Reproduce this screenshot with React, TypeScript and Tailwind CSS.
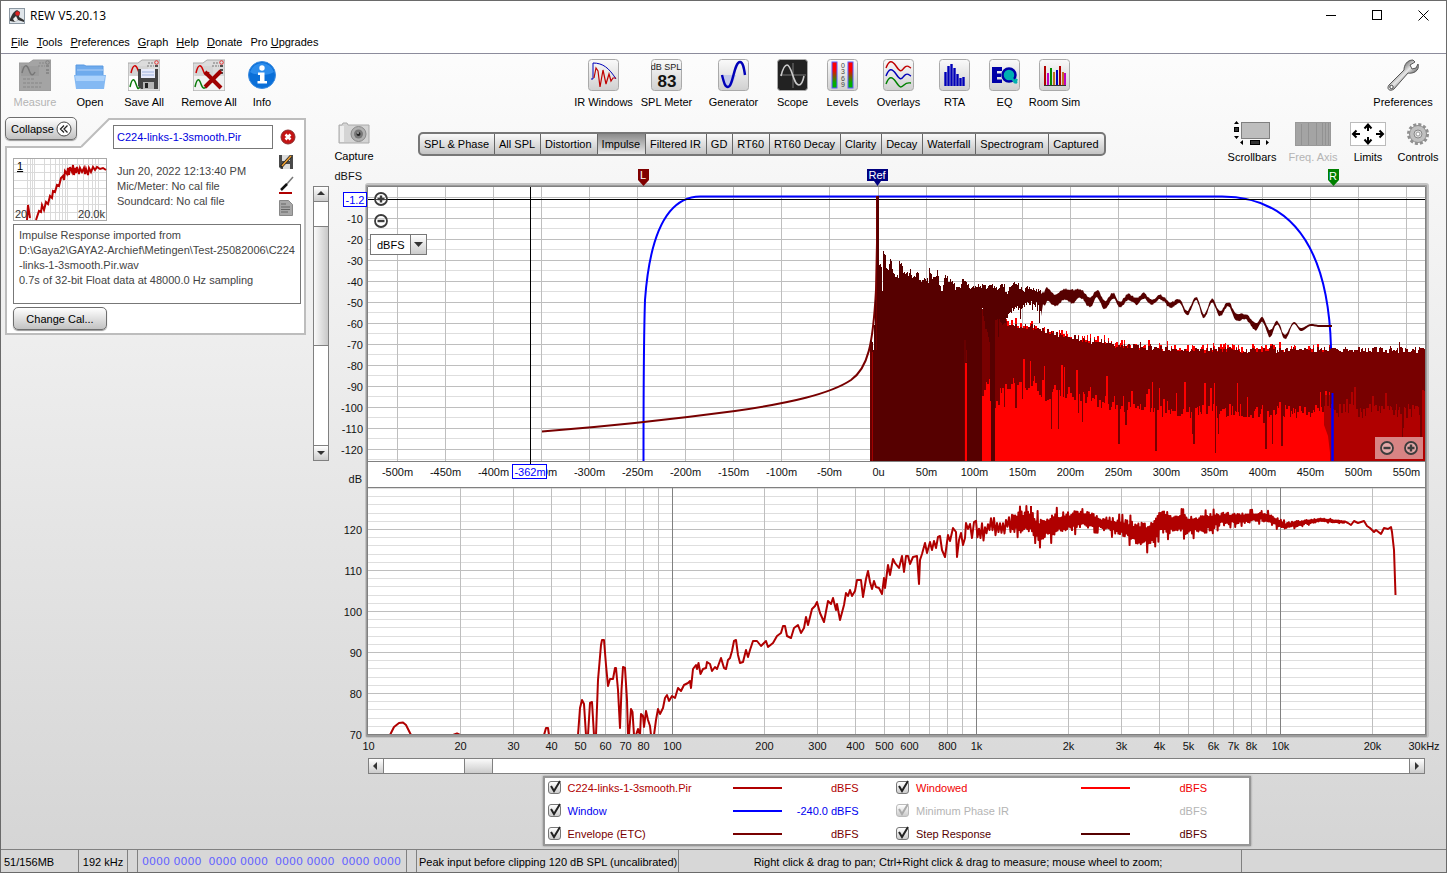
import type { ReactNode } from "react";

type Point = [number, number];
type Band = [number, number, number];

// Small seeded generator so that the traces are the same on every render
const makeRandom = (seed: number) => () => {
  seed = (seed * 16807) % 2147483647;
  return seed / 2147483647;
};

const lerp = (list: number[][], x: number, col: number, smooth = false) => {
  if (x <= list[0][0]) return list[0][col];
  for (let i = 1; i < list.length; i++) {
    if (x <= list[i][0]) {
      const a = list[i - 1];
      const b = list[i];
      const t = (x - a[0]) / (b[0] - a[0]);
      return a[col] + (b[col] - a[col]) * (smooth ? (1 - Math.cos(Math.PI * t)) / 2 : t);
    }
  }
  return list[list.length - 1][col];
};

const timeX = (i: number) => Math.round(397 + 48.05 * i) + 0.5;
const freqX = (f: number) => Math.round(368 + 304 * Math.log10(f / 10)) + 0.5;

const timeLabels = Array.from({ length: 22 }, (_, i) => {
  const t = -500 + i * 50;
  return t === 0 ? "0u" : `${t}m`;
});

const freqLines = [20, 30, 40, 50, 60, 70, 80, 90].flatMap((f) => [f, f * 10, f * 100]);

const freqLabels: [number, string][] = [
  [10, "10"], [20, "20"], [30, "30"], [40, "40"], [50, "50"], [60, "60"], [70, "70"], [80, "80"],
  [100, "100"], [200, "200"], [300, "300"], [400, "400"], [500, "500"], [600, "600"], [800, "800"],
  [1000, "1k"], [2000, "2k"], [3000, "3k"], [4000, "4k"], [5000, "5k"], [6000, "6k"], [7000, "7k"],
  [8000, "8k"], [10000, "10k"], [20000, "20k"],
];

// The step response is solid down to the axis before 981
const stepTop: Point[] = [
  [870, 340], [872, 342], [873, 350], [875, 300], [876, 196], [878, 196], [879, 265], [881, 267], [882, 290], [883, 251], [885, 255],
  [886, 268], [888, 272], [890, 258], [892, 268], [894, 275], [898, 276], [899, 261], [901, 263], [903, 274], [908, 274],
  [910, 269], [912, 278], [915, 275], [917, 272], [920, 282], [924, 278], [928, 281], [929, 270], [931, 276], [935, 279],
  [937, 272], [939, 284], [942, 291], [944, 278], [946, 276], [948, 281], [953, 282], [955, 289], [959, 289], [962, 280],
  [966, 283], [970, 287], [978, 286], [987, 287], [995, 286], [998, 289], [1001, 283], [1004, 286], [1006, 294], [1010, 286],
  [1013, 283], [1017, 284], [1022, 291], [1030, 287], [1040, 292], [1048, 289], [1055, 294], [1065, 289], [1073, 290], [1080, 289],
  [1090, 298], [1097, 290], [1105, 301], [1113, 293], [1120, 302], [1128, 294], [1137, 298], [1143, 293], [1152, 300], [1160, 295],
  [1171, 302], [1179, 299], [1187, 311], [1196, 297], [1204, 314], [1212, 299], [1220, 311], [1228, 302], [1237, 314], [1245, 314],
  [1256, 323], [1262, 317], [1270, 330], [1277, 321], [1285, 335], [1294, 322], [1301, 328], [1311, 324], [1320, 325], [1333, 325],
];

const stepBottom: Point[] = [
  [981, 461], [982, 309], [984, 322], [986, 330], [989, 340], [991, 461], [994, 461], [995, 318], [1000, 320], [1003, 325], [1008, 315],
  [1013, 308], [1020, 306], [1030, 302], [1038, 303], [1041, 316], [1043, 303], [1048, 301], [1055, 306], [1065, 299], [1073, 303],
  [1080, 297], [1090, 307], [1097, 297], [1105, 309], [1113, 298], [1120, 307], [1128, 300], [1137, 304], [1143, 298], [1152, 304],
  [1160, 299], [1171, 307], [1179, 303], [1187, 315], [1196, 300], [1204, 318], [1212, 302], [1220, 316], [1228, 306], [1237, 321],
  [1245, 319], [1256, 330], [1262, 321], [1270, 337], [1277, 324], [1285, 339], [1294, 324], [1301, 331], [1311, 326], [1320, 327],
  [1333, 327],
];

const envelope: Band[] = [
  [982, 311, 384], [990, 324, 372], [995, 318, 400], [1003, 324, 380], [1015, 326, 374], [1030, 328, 378], [1045, 331, 388],
  [1060, 336, 386], [1080, 340, 388], [1100, 343, 394], [1120, 347, 400], [1145, 349, 404], [1200, 351, 404], [1425, 351, 404],
];

const columns = (() => {
  const rand = makeRandom(4711);
  let windowed = "M982 461";
  let top = "M982 461";
  let bottom = "";
  let x = 982;
  while (x < 1425) {
    const next = Math.min(1425, x + (rand() < 0.45 ? 2 : 1));
    const ragged = rand() < 0.06 ? rand() * 5 : 0;
    const t = lerp(envelope, x, 1) + 2 - rand() * 6 - ragged;
    const r = rand();
    const spike = r < 0.09 ? 18 + rand() * 32 : r < 0.2 ? -rand() * 22 : rand() * 14;
    const b = lerp(envelope, x, 2) + (x < 1040 && spike > 18 ? spike - 14 : spike);
    const red = t - (rand() < 0.45 ? 1 + rand() * 5 : 0);
    if (x < 1330) windowed += `V${red.toFixed(0)}H${next}`;
    top += `V${t.toFixed(0)}H${next}`;
    bottom = `V${b.toFixed(0)}H${x}` + bottom;
    x = next;
  }
  return { windowed: `${windowed}V461Z`, envelope: `${top}${bottom}Z` };
})();

const stepPath = (() => {
  const rand = makeRandom(99);
  let top = "";
  let bottom = "";
  for (let x = 870; x < 1333; x += 1) {
    const wave = x > 1040;
    const noise = x < 880 ? 0 : x < 1048 ? 5 : x < 1180 ? 2 : x < 1290 ? 1.5 : 0;
    const t = lerp(stepTop, x, 1, wave) - noise * (rand() - 0.5);
    const drop = x > 996 && x < 1050 && rand() < 0.14 ? rand() * 16 : 0;
    const b = x < 982 ? 461 : lerp(stepBottom, x, 1, wave) + noise * (rand() - 0.3) + drop;
    if (wave) {
      top += `L${x} ${t.toFixed(1)}`;
      bottom = `L${x} ${Math.max(t + 2, b).toFixed(1)}` + bottom;
    } else {
      top += `L${x} ${t.toFixed(0)}H${x + 1}`;
      bottom = `L${x + 1} ${Math.min(461, b).toFixed(0)}H${x}` + bottom;
    }
  }
  return `M870 461${top}${bottom}Z`;
})();

const smoothSpl =
  "M390 735L394 727L399 723L403 722.5L406 725L411 735M453 735L457 733.5L460 735M544 735L546 728H548L549 735M578 735L580 708L582 700L584 704L586 735M588 735L590 703L592 702L594 735" +
  "M596 735L598 680L601 645L602 640H604L606 665L608 686L610 679H613L615 668H616L618 690L620 728L621.5 690L623 667L625 668L627 700L628 735M629 735L631 709L632.5 712L634 735M636 735L638 729L640 735L641 714L643 716L644 727L646 711L648 720L650 726L651 735" +
  "M654 735L656 720L658 709L660 714L663 708L665 698L667 695L669 701L672 696L675 698L678 688L681 691L684 685L688 683L690 681L691 688L693 669L696 665L697 669L698.5 663L700.5 674L703 669L706 668L707 662L710 664L712 671L715 667L717 669L721 658L724 668L726 669L728 660L730 658L732 651L734 641L736 640L738 655L740 663L743 662L746 650L748 657L750 650L753 641L757 641L761 646L766 641L768 647L773 643L777 636L781 633L783 626H785L787 636L791 638L794 628L798 625L801 633L804 628L806 617L808 625L812 609L815 606L817 602L820 613L824 622L828 601L831 604L833 598L836 610L837 604L840 620L844 605L846 593L848 596L850 590L852 596L855 591L857 580L861 580L863 597L866 579L868 571L870 582L872 589L874 581L876 587L879 588L882 594L884 578L885 588L888 565L890 575L893 559L895 563L899 568L902 556L904 572L906 556H908L910 564L913 557L917 556L919 584L920 560L922 554L925 543L927 553L930 542L932 550L934 541L936 548L938 537L940 536L942 550L945 557L948 535L950 541L953 528L956 532L957 557L959 540L961 533L963 545L965 538L966 523L968 529L970 524L972 538L974 522";

const splBand: Band[] = [
  [976, 532, 9], [983, 535, 9], [987, 527, 6], [993, 525, 6], [1000, 530, 8], [1008, 521, 6], [1014, 522, 12], [1030, 522, 13],
  [1040, 530, 14], [1050, 526, 14], [1065, 522, 12], [1085, 518, 11], [1100, 523, 8], [1120, 527, 10], [1135, 532, 13],
  [1147, 535, 14], [1154, 532, 13], [1160, 522, 14], [1180, 524, 12], [1205, 524, 11], [1220, 519, 8], [1245, 518, 6],
  [1262, 516, 6], [1275, 521, 6], [1285, 526, 4], [1300, 523, 3], [1320, 520, 2], [1345, 522, 1],
];

const splPath = (() => {
  const rand = makeRandom(2024);
  let d = smoothSpl;
  let sign = 1;
  for (let x = 976; x < 1345; x += x < 1012 ? 1.5 : 0.8) {
    sign = -sign;
    const amp = lerp(splBand, x, 2) * (rand() < 0.09 ? 1.25 : 0.35 + rand() * 0.5);
    d += `L${x.toFixed(1)} ${(lerp(splBand, x, 1) + sign * amp).toFixed(1)}`;
  }
  return `${d}L1348 523L1351 525L1354 521L1358 523L1364 521L1367 526L1370 528L1374 532L1376 530L1381 534L1384 528L1388 529L1391 527L1392 532L1394 550L1395.5 595M1031 525V506`;
})();

const Charts = () => (
  <svg viewBox="330 164 1116 592" className="block w-full h-auto font-['Liberation_Sans',Arial,sans-serif] text-[11px]" role="img" aria-label="Impulse and SPL graphs">
    <defs>
      <clipPath id="plotTop"><rect x="368" y="187" width="1057" height="274" /></clipPath>
      <clipPath id="plotBottom"><rect x="368" y="487" width="1057" height="248" /></clipPath>
    </defs>
    <rect x="365" y="183" width="1064" height="555" rx="3" fill="#c4c4c4" />
    <rect x="366" y="185" width="1061" height="552" rx="1" fill="#9c9c9c" />
    <rect x="368" y="187" width="1057" height="548" fill="#fff" />

    {/* impulse plot */}
    <g clipPath="url(#plotTop)" shapeRendering="crispEdges" strokeWidth="1">
      {Array.from({ length: 13 }, (_, i) => (
        <path key={i} d={`M368 ${207.5 + i * 21}H1425`} stroke="#dedede" />
      ))}
      {Array.from({ length: 13 }, (_, i) => (
        <path key={i} d={`M368 ${197.5 + i * 21}H1425`} stroke="#bebebe" />
      ))}
      {timeLabels.map((label, i) => (
        <path key={label} d={`M${timeX(i)} 187V461`} stroke="#bebebe" />
      ))}
    </g>
    <path d="M368 186.5H1425M367.5 187V735M1425.5 187V735M368 461.5H1425" stroke="#808080" fill="none" shapeRendering="crispEdges" />
    <g clipPath="url(#plotTop)">
      <rect x="1325" y="356" width="100" height="105" fill="#b00000" />
      <path d={columns.windowed} fill="#f00" shapeRendering="crispEdges" />
      <path d="M1324 395H1425V461H1331L1328 436L1324 425Z" fill="#b00000" />
      <path d="M643.5 461C643.5 400 644 330 645 300C649 245 663 197 700 196.5H1222C1290 197 1328 245 1331 347V356M1332.5 390V461" fill="none" stroke="#00f" strokeWidth="2" />
      <path d={columns.envelope} fill="#780000" shapeRendering="crispEdges" />
      <path d="M1332.5 393V461" stroke="#00f" strokeWidth="2" />
      <path d="M542 431.5C600 427 660 421 735 411C790 403 830 394 851 380C868 368 873 345 876 290L878 196" fill="none" stroke="#780000" strokeWidth="2" />
      <path d="M367 199.5H1425" stroke="#000" shapeRendering="crispEdges" />
      <path d={stepPath} fill="#560000" />
      <path d="M871 342V461M876.5 196V350" stroke="#780000" fill="none" />
      <path d="M872.5 352V461" stroke="#a00000" />
      <path d="M965 340V461M966.5 350V362" stroke="#780000" />
      <path d="M966 363V461" stroke="#f00" strokeWidth="2" />
    </g>
    <path d="M530.5 187V464" stroke="#000" shapeRendering="crispEdges" />

    <path d="M638 169H649V180L643.5 186L638 180Z" fill="#800000" />
    <path d="M867 169H888V181H881L877.5 186L874 181H867Z" fill="#000080" />
    <path d="M1328 169H1339V180L1333.5 186L1328 180Z" fill="#008000" />
    <g fill="#fff" textAnchor="middle">
      <text x="643" y="179">L</text>
      <text x="877" y="179">Ref</text>
      <text x="1333" y="180">R</text>
    </g>

    <g textAnchor="end" fill="#111">
      <text x="362" y="180">dBFS</text>
      {Array.from({ length: 12 }, (_, i) => (
        <text key={i} x="363" y={223 + i * 21}>{-10 - i * 10}</text>
      ))}
      <text x="362" y="483">dB</text>
      {[120, 110, 100, 90, 80, 70].map((v, i) => (
        <text key={v} x="362" y={534 + i * 41}>{v}</text>
      ))}
    </g>
    <g textAnchor="middle" fill="#111">
      {timeLabels.map((label, i) => (
        <text key={label} x={timeX(i)} y="476">{label}</text>
      ))}
      {freqLabels.map(([f, label]) => (
        <text key={f} x={freqX(f)} y="750">{label}</text>
      ))}
      <text x="1424" y="750">30kHz</text>
    </g>
    <g fill="#fff" stroke="#00f" shapeRendering="crispEdges">
      <rect x="343.5" y="192.5" width="23" height="14" />
      <rect x="512.5" y="464.5" width="34" height="14" />
    </g>
    <g fill="#00f" textAnchor="middle">
      <text x="355" y="204">-1.2</text>
      <text x="530" y="476">-362m</text>
    </g>

    {/* frequency response plot */}
    <g clipPath="url(#plotBottom)" shapeRendering="crispEdges" strokeWidth="1">
      {Array.from({ length: 30 }, (_, i) => (
        <path key={i} d={`M368 ${Math.round(734 - (i + 1) * 8.2) + 0.5}H1425`} stroke="#dedede" />
      ))}
      {[529.5, 570.5, 611.5, 652.5, 693.5].map((y) => (
        <path key={y} d={`M368 ${y}H1425`} stroke="#bebebe" />
      ))}
      {[...freqLines, 20000].map((f) => (
        <path key={f} d={`M${freqX(f)} 487V735`} stroke="#bebebe" />
      ))}
      {[100, 1000, 10000].map((f) => (
        <path key={f} d={`M${freqX(f)} 487V735`} stroke="#808080" />
      ))}
      <path d="M368 487.5H1425" stroke="#808080" />
    </g>
    <path d={splPath} fill="none" stroke="#b00000" strokeWidth="2" strokeLinejoin="round" clipPath="url(#plotBottom)" />
    <path d="M368 734.5H1425" stroke="#808080" shapeRendering="crispEdges" />
  </svg>
);

const Tile = ({ children, dark }: { children: ReactNode; dark?: boolean }) => (
  <svg width="32" height="32" viewBox="0 0 32 32">
    <defs>
      <linearGradient id="tile" x1="0" y1="0" x2="0" y2="1">
        <stop offset="0" stopColor="#fafafa" />
        <stop offset="1" stopColor="#d0d0d0" />
      </linearGradient>
    </defs>
    <rect x="0.5" y="0.5" width="30" height="31" rx="3" fill={dark ? "#222" : "url(#tile)"} stroke="#aaa" />
    {children}
  </svg>
);

const Folder = ({ gray }: { gray?: boolean }) => (
  <>
    <path d="M0 4H10L14 1H32V32H0Z" fill={gray ? "#a4a4a4" : "#dcdcdc"} stroke={gray ? "#999" : "#aaa"} />
    <path d="M2 7H20V17H2Z" fill={gray ? "#9c9c9c" : "#d4d4d4"} />
    <path d="M3 14C5 5 8 5 10 11S14 17 16 13" fill="none" stroke={gray ? "#777" : "#d00000"} strokeWidth="1.5" />
    <path d="M20 4H26M19 7H26" stroke={gray ? "#888" : "#777"} strokeDasharray="2 1" />
    <circle cx="28.5" cy="3.5" r="1.8" fill="none" stroke={gray ? "#808080" : "#e03030"} />
    <path d="M27 7H30M27 11H30M27 14H30" stroke={gray ? "#808080" : "#222"} strokeWidth="1.5" />
  </>
);

const MeasureIcon = () => (
  <svg width="32" height="32" viewBox="0 0 32 32">
    <Folder gray />
    <path d="M4 20H16M4 24H24M4 28H22" stroke="#868686" strokeDasharray="3 1" />
  </svg>
);

const OpenIcon = () => (
  <svg width="32" height="32" viewBox="0 0 32 32">
    <path d="M2 6H10L12 7H29V18H2Z" fill="#6fabed" stroke="#5b9ae2" />
    <path d="M3 11H29" stroke="#8fbdf2" strokeWidth="2" />
    <path d="M0 16H32L30 30H2Z" fill="#84b9f3" />
    <path d="M1 17H31L30 22H2Z" fill="#acd2fb" />
  </svg>
);

const SaveAllIcon = () => (
  <svg width="32" height="32" viewBox="0 0 32 32">
    <Folder />
    <path d="M1 17H12V31H1Z" fill="#fff" />
    <path d="M2 28C4 19 6 19 8 25S10 30 12 28" fill="none" stroke="#0a7a0a" strokeWidth="1.5" />
    <path d="M10 10H30V30H13L10 27Z" fill="#444" />
    <rect x="13" y="10" width="14" height="9" fill="#e8ebfa" />
    <path d="M14 13H26M14 16H26" stroke="#9fb2dc" />
    <path d="M15 23H26V30H15Z" fill="#b5b5b5" />
    <rect x="17" y="24" width="3" height="5" fill="#222" />
  </svg>
);

const RemoveAllIcon = () => (
  <svg width="32" height="32" viewBox="0 0 32 32">
    <Folder />
    <path d="M1 17H31V31H1Z" fill="#f1f1f1" />
    <path d="M2 28C4 19 6 19 8 25S12 30 15 25" fill="none" stroke="#0a7a0a" strokeWidth="1.5" />
    <path d="M18 20H24M18 23H24" stroke="#888" strokeDasharray="2 1" />
    <path d="M12 13L28 29M28 12L12 28" stroke="#a00000" strokeWidth="4" />
  </svg>
);

const InfoIcon = () => (
  <svg width="28" height="32" viewBox="0 0 28 32">
    <circle cx="14" cy="16" r="13.5" fill="#0a6fd8" stroke="#3c8ce0" />
    <path d="M2 13A12.5 12.5 0 0 1 26 13C20 17 8 17 2 13Z" fill="#2b8cec" />
    <circle cx="14" cy="9" r="2.7" fill="#fff" />
    <path d="M10 13.5H16.5V22H19V24.5H9.5V22H12V16H10Z" fill="#fff" />
  </svg>
);

const IrIcon = () => (
  <Tile>
    <path d="M3 20H5V4C15 4 21 9 28 20" fill="none" stroke="#0000b8" />
    <path d="M6 19L8 9L10 12L12 28L15 11L18 25L21 15L23 22L25 19H28" fill="none" stroke="#c00000" strokeWidth="1.2" />
  </Tile>
);

const MeterIcon = () => (
  <Tile>
    <text x="15" y="11" textAnchor="middle" fontSize="9" fill="#222">dB SPL</text>
    <text x="16" y="28" textAnchor="middle" fontSize="17" fontWeight="bold" fill="#111">83</text>
  </Tile>
);

const GeneratorIcon = () => (
  <Tile>
    <path d="M4 16H18C15 24 14 28 11 28S6 22 4 16Z" fill="#c3c9e8" />
    <path d="M4 16C6 24 7 28 10 28C15 28 16 3 22 3C25 3 26 9 27 16" fill="none" stroke="#0000b8" strokeWidth="2.4" />
  </Tile>
);

const ScopeIcon = () => (
  <Tile dark>
    <path d="M3 16H29M16 4V29" stroke="#777" />
    <path d="M4 17C6 9 8 6 10 6C15 6 16 26 22 26C25 26 26 22 27 17" fill="none" stroke="#ccc" strokeWidth="1.6" />
  </Tile>
);

const LevelsIcon = () => (
  <Tile>
    <defs>
      <linearGradient id="level" x1="0" y1="0" x2="0" y2="1">
        <stop offset="0.3" stopColor="#f00" />
        <stop offset="0.8" stopColor="#00b000" />
      </linearGradient>
    </defs>
    <rect x="5" y="3" width="5" height="26" fill="url(#level)" stroke="#5b5bff" />
    <rect x="21" y="3" width="5" height="26" fill="url(#level)" stroke="#5b5bff" />
    <g fontSize="7" fill="#444" textAnchor="middle">
      <text x="16" y="9">0</text>
      <text x="16" y="15">3</text>
      <text x="16" y="22">6</text>
      <text x="16" y="28">9</text>
    </g>
  </Tile>
);

const OverlaysIcon = () => (
  <Tile>
    <g fill="none" strokeWidth="1.4">
      <path d="M3 9C6 1 9 1 13 7S18 13 21 9S26 8 28 9" stroke="#c00000" />
      <path d="M3 17C6 9 9 9 13 15S18 21 21 17S26 16 28 17" stroke="#0000b8" />
      <path d="M3 25C6 17 9 17 13 23S18 29 21 26S26 24 28 24" stroke="#008000" />
    </g>
  </Tile>
);

const RtaIcon = () => (
  <Tile>
    <path d="M6.5 27V13M9.5 27V7M12.5 27V5M15.5 27V9M18.5 27V15M21.5 27V19M24.5 27V18" stroke="#0000b8" strokeWidth="2.4" />
  </Tile>
);

const EqIcon = () => (
  <Tile>
    <path d="M3 8H13V12H8V14.5H12V18H8V20.5H13V24H3Z" fill="#0000a8" />
    <circle cx="20" cy="16" r="6.5" fill="#00b0b0" stroke="#0000a8" strokeWidth="2.5" />
    <path d="M22 19L28 24M28 20L25 24" stroke="#00b0b0" strokeWidth="2.5" />
  </Tile>
);

const RoomIcon = () => (
  <Tile>
    <path d="M5 26.5H27" stroke="#333" />
    <g strokeWidth="2">
      <path d="M6 26V7M21 26V7" stroke="#b00000" />
      <path d="M9 26V14M26 26V14" stroke="#c000c0" />
      <path d="M12 26V9" stroke="#008800" />
      <path d="M15 26V13M24 26V13" stroke="#c07020" />
      <path d="M18 26V11" stroke="#0000b8" />
    </g>
  </Tile>
);

const WrenchIcon = () => (
  <svg width="32" height="32" viewBox="0 0 32 32">
    <defs>
      <linearGradient id="steel" x1="0" y1="0" x2="1" y2="1">
        <stop offset="0.3" stopColor="#666" />
        <stop offset="0.5" stopColor="#e8e8e8" />
        <stop offset="0.7" stopColor="#555" />
      </linearGradient>
    </defs>
    <path d="M2 26L17 11C17 6 20 1 26 1L28 3L23 6L25 10L29 9L31 5C33 12 26 15 21 14L7 30C3 33 -1 30 2 26Z" fill="url(#steel)" stroke="#555" />
    <circle cx="4.5" cy="28" r="1.7" fill="#fff" stroke="#444" />
  </svg>
);

type Tool = { label: string; icon: ReactNode; width: string; disabled?: boolean };

const fileTools: Tool[] = [
  { label: "Measure", icon: <MeasureIcon />, width: "w-14", disabled: true },
  { label: "Open", icon: <OpenIcon />, width: "w-[54px]" },
  { label: "Save All", icon: <SaveAllIcon />, width: "w-[54px]" },
  { label: "Remove All", icon: <RemoveAllIcon />, width: "w-[76px]" },
  { label: "Info", icon: <InfoIcon />, width: "w-[30px]" },
];

const signalTools: Tool[] = [
  { label: "IR Windows", icon: <IrIcon />, width: "w-16" },
  { label: "SPL Meter", icon: <MeterIcon />, width: "w-[62px]" },
  { label: "Generator", icon: <GeneratorIcon />, width: "w-[72px]" },
  { label: "Scope", icon: <ScopeIcon />, width: "w-[46px]" },
  { label: "Levels", icon: <LevelsIcon />, width: "w-[54px]" },
  { label: "Overlays", icon: <OverlaysIcon />, width: "w-[58px]" },
  { label: "RTA", icon: <RtaIcon />, width: "w-[54px]" },
  { label: "EQ", icon: <EqIcon />, width: "w-[46px]" },
  { label: "Room Sim", icon: <RoomIcon />, width: "w-[54px]" },
];

const ToolButton = ({ label, icon, width, disabled }: Tool) => (
  <button disabled={disabled} className={`${width} flex flex-col items-center gap-1 whitespace-nowrap disabled:text-[#b4b4b4]`}>
    {icon}
    <span>{label}</span>
  </button>
);

const ScrollbarsIcon = () => (
  <svg width="38" height="25" viewBox="0 0 38 25">
    <rect x="8.5" y="1.5" width="28" height="16" fill="#bebebe" stroke="#808080" />
    <path d="M1 3L3.5 0L6 3ZM1 15L3.5 18L6 15ZM10 19V24L7 21.5ZM33 19V24L36 21.5Z" fill="#000" />
    <rect x="1.5" y="6.5" width="4" height="4" fill="#333" stroke="#000" />
    <rect x="17.5" y="19.5" width="9" height="4" fill="#333" stroke="#000" />
  </svg>
);

const FreqAxisIcon = () => (
  <svg width="36" height="25" viewBox="0 0 36 25">
    <rect x="0.5" y="1.5" width="35" height="23" fill="#a4a4a4" stroke="#999" />
    <path d="M6.5 3V24M13.5 2V24M21.5 2V24M27.5 2V24M30.5 2V24M33.5 2V24" stroke="#929292" />
  </svg>
);

const LimitsIcon = () => (
  <svg width="36" height="25" viewBox="0 0 36 25">
    <rect x="0.5" y="1.5" width="35" height="23" fill="#fff" stroke="#bbb" />
    <path d="M18 4V10M18 16V22M3 13H10M26 13H33M14.5 7.5L18 3.5L21.5 7.5M14.5 18.5L18 22.5L21.5 18.5M6.5 9.5L3 13L6.5 16.5M29.5 9.5L33 13L29.5 16.5" fill="none" stroke="#000" strokeWidth="2" />
  </svg>
);

const GearIcon = () => (
  <svg width="24" height="25" viewBox="0 0 24 25">
    <circle cx="12" cy="13" r="9.5" fill="none" stroke="#909090" strokeWidth="3" strokeDasharray="3 1.97" />
    <circle cx="12" cy="13" r="8.5" fill="#c0c0c0" stroke="#8c8c8c" />
    <circle cx="12" cy="13" r="4" fill="#e0e0e0" stroke="#888" />
    <circle cx="12" cy="13" r="2" fill="#fff" stroke="#999" />
  </svg>
);

const CameraIcon = () => (
  <svg width="32" height="24" viewBox="0 0 32 24">
    <path d="M1 4H4L5 2H9L10 4H31V22H1Z" fill="#d4d4d4" stroke="#aaa" />
    <path d="M2 5H6V21H2Z" fill="#eee" />
    <circle cx="20.5" cy="13" r="7.5" fill="#b0b0b0" stroke="#8a8a8a" />
    <circle cx="20.5" cy="13" r="4.5" fill="#777" />
    <circle cx="20.5" cy="13" r="2" fill="#222" />
    <circle cx="20" cy="12" r="0.8" fill="#fff" />
  </svg>
);

const graphTools: Tool[] = [
  { label: "Scrollbars", icon: <ScrollbarsIcon />, width: "w-[62px]" },
  { label: "Freq. Axis", icon: <FreqAxisIcon />, width: "w-[60px]", disabled: true },
  { label: "Limits", icon: <LimitsIcon />, width: "w-[50px]" },
  { label: "Controls", icon: <GearIcon />, width: "w-[50px]" },
];

const tabs = [
  "SPL & Phase", "All SPL", "Distortion", "Impulse", "Filtered IR", "GD", "RT60", "RT60 Decay",
  "Clarity", "Decay", "Waterfall", "Spectrogram", "Captured",
];

const TitleBar = () => (
  <header className="h-[29px] flex items-center bg-white pl-2">
    <svg width="16" height="16" viewBox="0 0 16 16">
      <rect x="0.5" y="0.5" width="15" height="15" fill="#dfe5ea" stroke="#8c98a2" />
      <path d="M1 11C4 4 6 3 8 2L11 4L10 9L15 12V14L9 12L6 14L1 13Z" fill="#333" />
      <path d="M4 11L7 8L9 12L6 14Z" fill="#eee" />
      <circle cx="8.5" cy="5.5" r="2.2" fill="#d22" />
    </svg>
    <h1 className="ml-[5px] mr-auto text-xs font-['Open_Sans','Noto_Sans',sans-serif]">REW V5.20.13</h1>
    <button aria-label="Minimize" className="w-[46px] h-full flex items-center justify-center">
      <svg width="11" height="11" viewBox="0 0 11 11"><path d="M0 5.5H10" stroke="#000" /></svg>
    </button>
    <button aria-label="Maximize" className="w-[46px] h-full flex items-center justify-center">
      <svg width="11" height="11" viewBox="0 0 11 11"><rect x="0.5" y="0.5" width="9" height="9" fill="none" stroke="#000" /></svg>
    </button>
    <button aria-label="Close" className="w-[46px] h-full flex items-center justify-center">
      <svg width="11" height="11" viewBox="0 0 11 11"><path d="M0.5 0.5L10.5 10.5M10.5 0.5L0.5 10.5" stroke="#000" /></svg>
    </button>
  </header>
);

const MenuBar = () => (
  <nav className="h-6 flex items-center gap-2 bg-white pl-[10px] border-b border-[#8c8c9c]">
    <button><u>F</u>ile</button>
    <button><u>T</u>ools</button>
    <button><u>P</u>references</button>
    <button><u>G</u>raph</button>
    <button><u>H</u>elp</button>
    <button><u>D</u>onate</button>
    <button>Pro <u>U</u>pgrades</button>
  </nav>
);

const Thumbnail = () => (
  <svg width="94" height="63" viewBox="0 0 94 63" className="block shrink-0">
    <rect x="0.5" y="0.5" width="93" height="62" fill="#fff" stroke="#aaa" />
    <path d="M1 6.5H93M1 14.5H93M1 22.5H93M1 30.5H93M1 38.5H93M1 46.5H93M1 54.5H93M14.5 1V62M17.5 1V62M19.5 1V62M21.5 1V62M31.5 1V62M37.5 1V62M42.5 1V62M46.5 1V62M49.5 1V62M52.5 1V62M54.5 1V62M64.5 1V62M70.5 1V62M75.5 1V62M79.5 1V62M82.5 1V62M85.5 1V62" stroke="#dadada" />
    <path d="M14 62L15 47L17 60M23 62L26 53L28 54L29 47L31 52L33 44L35 46L37 38L39 40L40 33L42 34L44 27L46 28L48 20L50 18L51 22L52 13L54 16L55 10L56 17L57 9L59 14L60 7L61 17L62 10L63 15L64 9L66 16L67 10L69 14L71 10L72 16L73 11L75 17L76 10L78 14L80 9L82 12L84 9L87 11L90 10L93 12" fill="none" stroke="#b80000" strokeWidth="2" />
    <text x="4" y="12" fontSize="11" textDecoration="underline">1</text>
    <text x="2" y="60" fontSize="11" fill="#333">20</text>
    <text x="92" y="60" fontSize="11" fill="#333" textAnchor="end">20.0k</text>
  </svg>
);

const raised = "border border-[#6e6e6e] rounded-[5px] bg-linear-to-b from-white to-[#c2c2c2] shadow-[0_1px_1px_#999]";

const MeasurementCard = () => (
  <section className="w-[301px] ml-[4px] pt-[5px]">
    <div className="flex">
      <div className="w-[76px] h-[31px] border-b-2 border-[#bdbdbd]">
        <button className={`${raised} w-[72px] h-[23px] flex items-center justify-between pl-[5px] pr-1`}>
          Collapse
          <svg width="16" height="16" viewBox="0 0 16 16">
            <circle cx="8" cy="8" r="7" fill="#fff" stroke="#444" />
            <path d="M8 4.5L4.5 8L8 11.5M11.5 4.5L8 8L11.5 11.5" fill="none" stroke="#222" strokeWidth="1.3" />
          </svg>
        </button>
      </div>
      <svg width="29" height="31" viewBox="0 0 29 31" className="shrink-0">
        <path d="M0 31L29 2V31Z" fill="#fff" />
        <path d="M0 30L28 2H30" fill="none" stroke="#bdbdbd" strokeWidth="2" />
      </svg>
      <div className="flex-1 mt-px pt-[5px] h-[30px] flex items-start justify-between bg-white border-t-2 border-r-2 border-[#bdbdbd] pl-[3px] pr-2">
        <input aria-label="Measurement name" defaultValue="C224-links-1-3smooth.Pir" className="w-[160px] h-6 shrink-0 border border-[#777] bg-white pl-[3px] pb-px text-[#0000e0] outline-none" />
        <button aria-label="Remove measurement" className="mt-1">
          <svg width="16" height="16" viewBox="0 0 16 16">
            <circle cx="8" cy="8" r="7" fill="#c41414" stroke="#8a3030" />
            <path d="M5.5 5.5L10.5 10.5M10.5 5.5L5.5 10.5" stroke="#fff" strokeWidth="2.5" />
          </svg>
        </button>
      </div>
    </div>
    <div className="bg-white border-x-2 border-b-2 border-[#bdbdbd] px-[6px] pb-[3px] text-[#444]">
      <div className="flex pt-[10px]">
        <Thumbnail />
        <p className="ml-[10px] mt-[6px] leading-[15px] whitespace-nowrap">
          Jun 20, 2022 12:13:40 PM<br />
          Mic/Meter: No cal file<br />
          Soundcard: No cal file
        </p>
        <div className="ml-auto mr-1 -mt-1 flex flex-col gap-[6px]">
          <button aria-label="Save measurement">
            <svg width="16" height="16" viewBox="0 0 16 16">
              <path d="M1 1H15V15H3L1 13Z" fill="#4a4a4a" />
              <path d="M4 1H12V7H4ZM5 10H12V15H5Z" fill="#ddd" />
              <path d="M3 13L13 2" stroke="#222" strokeWidth="3" />
              <path d="M4 12L13 2" stroke="#f0a030" strokeWidth="1.5" />
            </svg>
          </button>
          <button aria-label="Trace colour">
            <svg width="16" height="18" viewBox="0 0 16 18">
              <path d="M15 1L8 9" stroke="#777" strokeWidth="1.5" />
              <path d="M9 8L3 14" stroke="#111" strokeWidth="2.5" />
              <path d="M1 17H14" stroke="#b00000" strokeWidth="2" />
            </svg>
          </button>
          <button aria-label="Notes">
            <svg width="16" height="16" viewBox="0 0 16 16">
              <path d="M1.5 0.5H10.5L14.5 4.5V15.5H1.5Z" fill="#a8a8a8" stroke="#888" />
              <path d="M3 4H8M3 7H12M3 9.5H12M3 12H10" stroke="#666" />
            </svg>
          </button>
        </div>
      </div>
      <textarea
        aria-label="Notes text"
        className="block mt-[3px] w-[288px] h-20 resize-none overflow-hidden border border-[#777] bg-white px-[5px] pt-[3px] leading-[15px] outline-none whitespace-pre"
        defaultValue={"Impulse Response imported from\nD:\\Gaya2\\GAYA2-Archief\\Metingen\\Test-25082006\\C224\n-links-1-3smooth.Pir.wav\n0.7s of 32-bit Float data at 48000.0 Hz sampling"}
      />
      <button className={`${raised} block mt-[3px] w-[94px] h-[23px] text-black`}>Change Cal...</button>
    </div>
  </section>
);

const arrowPaths = { up: "M4 9L8 5L12 9Z", down: "M4 6L8 10L12 6Z", left: "M9 4L5 8L9 12Z", right: "M6 4L10 8L6 12Z" };

const ArrowButton = ({ dir }: { dir: keyof typeof arrowPaths }) => (
  <button aria-label={`Scroll ${dir}`} className="w-4 h-4 shrink-0 flex items-center justify-center border border-[#808080] bg-linear-to-b from-white to-[#ccc]">
    <svg width="16" height="16" viewBox="0 0 16 16" className="shrink-0">
      <path d={arrowPaths[dir]} fill="#333" />
    </svg>
  </button>
);

const ZoomIcon = ({ plus }: { plus?: boolean }) => (
  <svg width="14" height="14" viewBox="0 0 14 14">
    <circle cx="7" cy="7" r="6" fill="#fff" fillOpacity="0.3" stroke="#3c3c3c" strokeWidth="1.8" />
    <path d={plus ? "M3.5 7H10.5M7 3.5V10.5" : "M3.5 7H10.5"} stroke="#3c3c3c" strokeWidth="2.4" />
  </svg>
);

const legend = [
  { name: "C224-links-1-3smooth.Pir", value: "dBFS", text: "text-[#b00000]", line: "bg-[#b00000]" },
  { name: "Windowed", value: "dBFS", text: "text-[#f00000]", line: "bg-[#ff0000]" },
  { name: "Window", value: "-240.0 dBFS", text: "text-[#0000f0]", line: "bg-[#0000ff]" },
  { name: "Minimum Phase IR", value: "dBFS", text: "text-[#b4b4b4]", line: "", disabled: true },
  { name: "Envelope (ETC)", value: "dBFS", text: "text-[#780000]", line: "bg-[#780000]" },
  { name: "Step Response", value: "dBFS", text: "text-[#560000]", line: "bg-[#560000]" },
];

const Legend = () => (
  <section className="w-full max-w-[708px] mx-auto mt-[2px] grid grid-cols-2 gap-y-[3px] bg-white border-2 border-[#969696] shadow-[0_0_2px_#888] pl-[3px] pr-1">
    {legend.map((row) => (
      <label key={row.name} className={`h-5 w-[311px] flex items-center ${row.text}`}>
        <span className="relative w-[14px] h-[14px] mr-[6px] shrink-0">
          <input type="checkbox" defaultChecked disabled={row.disabled} className="block appearance-none w-[13px] h-[13px] border border-[#777] rounded-[3px] bg-linear-to-b from-white to-[#ccc] disabled:border-[#bbb]" />
          <svg width="14" height="14" viewBox="0 0 14 14" className="absolute left-0 -top-px pointer-events-none">
            <path d="M3 6L6 11L12 1" fill="none" stroke={row.disabled ? "#aaa" : "#222"} strokeWidth="2" />
          </svg>
        </span>
        <span className="w-[165px]">{row.name}</span>
        <span className={`w-[49px] h-[2px] ${row.line}`} />
        <span className="w-[77px] text-right">{row.value}</span>
      </label>
    ))}
  </section>
);

const StatusBar = () => (
  <footer className="h-[23px] mt-auto shrink-0 flex items-stretch leading-[24px] whitespace-nowrap bg-[#d7d7d7] border-t border-[#808080] divide-x divide-[#808080]">
    <div className="w-[78px] pl-[3px]">51/156MB</div>
    <div className="w-[49px] text-center">192 kHz</div>
    <div className="w-[10px]" />
    <div className="w-[269px] pl-1 font-['DejaVu_Sans',sans-serif] text-[#6464ff] whitespace-pre">0000 0000  0000 0000  0000 0000  0000 0000</div>
    <div className="w-[10px]" />
    <div className="w-[262px] pl-[2px]">Peak input before clipping 120 dB SPL (uncalibrated)</div>
    <div className="w-[563px] pr-1 text-center">Right click &amp; drag to pan; Ctrl+Right click &amp; drag to measure; mouse wheel to zoom;</div>
    <div className="flex-1" />
  </footer>
);

const GraphPanel = () => (
  <main className="flex-1 min-w-0">
    <div className="h-[52px] flex items-start">
      <button className="w-12 pt-[9px] flex flex-col items-center gap-1">
        <CameraIcon />
        <span>Capture</span>
      </button>
      <div role="tablist" className="ml-10 mt-5 h-6 flex border-2 border-[#777] rounded-[5px] overflow-hidden divide-x divide-[#666] bg-linear-to-b from-[#fafafa] to-[#c4c4c4] whitespace-nowrap">
        {tabs.map((tab) => (
          <button
            key={tab}
            role="tab"
            aria-selected={tab === "Impulse"}
            className="pl-1 pr-[5px] aria-selected:bg-linear-to-b aria-selected:from-[#8c8c8c] aria-selected:to-[#e8e8e8]"
          >
            {tab}
          </button>
        ))}
      </div>
      <div className="ml-auto mr-[3px] pt-[9px] flex">
        {graphTools.map((tool) => (
          <ToolButton key={tool.label} {...tool} />
        ))}
      </div>
    </div>
    <div className="relative">
      <Charts />
      <button aria-label="Zoom in vertically" className="absolute left-[44px] top-[28px]"><ZoomIcon plus /></button>
      <button aria-label="Zoom out vertically" className="absolute left-[44px] top-[50px]"><ZoomIcon /></button>
      <div className="absolute left-[40px] top-[70px] w-[57px] h-[21px] flex border border-[#777] bg-white">
        <select aria-label="Vertical units" className="w-full appearance-none pl-[6px] outline-none">
          <option>dBFS</option>
        </select>
        <span className="absolute right-0 top-0 w-4 h-full flex items-center justify-center border-l border-[#777] bg-linear-to-b from-white to-[#ccc] pointer-events-none">
          <svg width="9" height="5" viewBox="0 0 9 5"><path d="M0 0H9L4.5 5Z" fill="#333" /></svg>
        </span>
      </div>
      <div className="absolute right-[23px] top-[273px] w-12 h-[22px] flex items-center justify-around bg-[#d88484]">
        <button aria-label="Zoom out horizontally"><ZoomIcon /></button>
        <button aria-label="Zoom in horizontally"><ZoomIcon plus /></button>
      </div>
    </div>
    <div className="ml-[38px] mr-[21px]">
      <div className="mt-[2px] h-4 flex bg-white border-y border-[#808080] items-center">
        <ArrowButton dir="left" />
        <div className="ml-[80px] w-[29px] h-full border-x border-[#808080] bg-linear-to-b from-[#fafafa] to-[#ccc]" />
        <div className="flex-1" />
        <ArrowButton dir="right" />
      </div>
      <Legend />
    </div>
  </main>
);

const App = () => {
  return (
    <div className="min-h-screen flex flex-col border border-[#6a6a6a] bg-linear-to-b from-white to-[#d4d4d4] text-[11px] leading-[14px] text-black font-['Liberation_Sans',Arial,sans-serif]">
      <TitleBar />
      <MenuBar />
      <div className="h-[58px] pt-[5px] flex justify-between pl-[6px] pr-2">
        <div className="flex pr-2">
          {fileTools.map((tool) => (
            <ToolButton key={tool.label} {...tool} />
          ))}
        </div>
        <div className="flex">
          {signalTools.map((tool) => (
            <ToolButton key={tool.label} {...tool} />
          ))}
        </div>
        <ToolButton label="Preferences" icon={<WrenchIcon />} width="w-[70px]" />
      </div>
      <div className="flex items-start">
        <aside className="w-[329px] shrink-0 flex items-start">
          <MeasurementCard />
          <div className="ml-[7px] mt-[74px] w-4 h-[275px] flex flex-col bg-white border-x border-[#808080] items-center">
            <ArrowButton dir="up" />
            <div className="mt-6 w-full h-[120px] border-y border-[#808080] bg-linear-to-r from-[#fafafa] to-[#c8c8c8]" />
            <div className="flex-1" />
            <ArrowButton dir="down" />
          </div>
        </aside>
        <GraphPanel />
      </div>
      <StatusBar />
    </div>
  );
};

export default App;
